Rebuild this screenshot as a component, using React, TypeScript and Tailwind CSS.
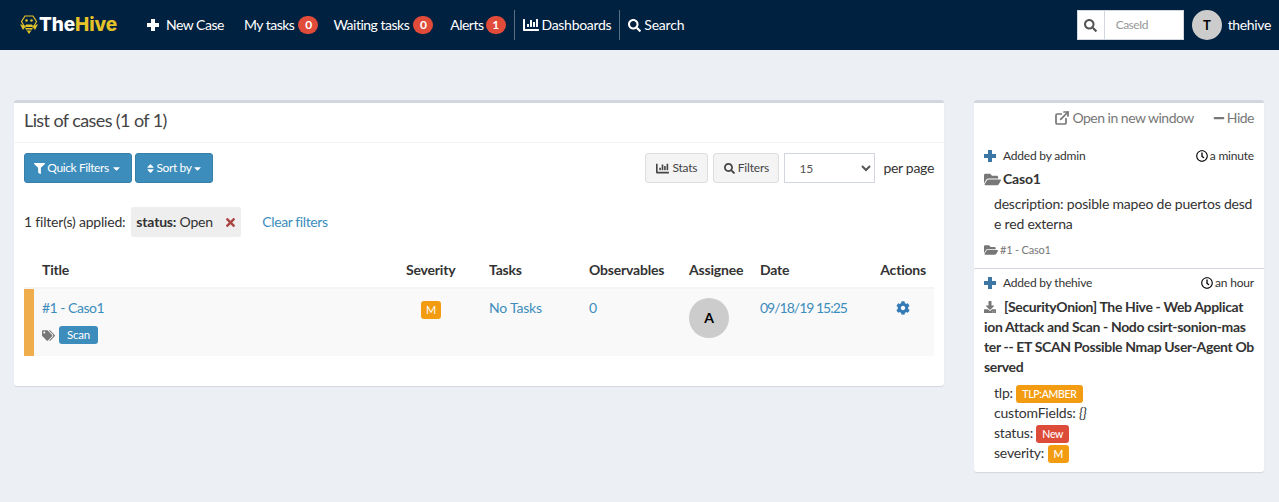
import { FaFilter, FaSort, FaCaretDown, FaChartBar, FaSearch, FaTimes, FaTags, FaCog, FaMinus, FaRegClock, FaFolderOpen, FaDownload } from "react-icons/fa";
import { FiExternalLink } from "react-icons/fi";

function Badge({ n, className = "ml-[4px]" }: { n: number; className?: string }) {
  return (
    <span className={`inline-flex h-[18px] w-5 items-center justify-center rounded-full bg-[#e04b3a] text-xs font-bold text-white ${className}`}>
      {n}
    </span>
  );
}

// thick FA4 style plus, the FA5 one from react-icons is too thin here
function PlusIcon({ className }: { className: string }) {
  return (
    <svg width="12" height="12" viewBox="0 0 12 12" fill="currentColor" className={className}>
      <path d="M4 0h4v4h4v4H8v4H4V8H0V4h4z" />
    </svg>
  );
}

function BeeLogo() {
  return (
    <svg width="18" height="19" viewBox="0 0 18 19" fill="none">
      <path d="M5 1h8l3.500 5.500L14 11H4L1.500 6.500z" stroke="#e6c229" strokeWidth="1.2" />
      <circle cx="6.500" cy="5.500" r="1.300" fill="#e6c229" />
      <circle cx="11.500" cy="5.500" r="1.300" fill="#e6c229" />
      <path d="M0 9l5.500 2.500L3 15zM18 9l-5.500 2.500L15 15z" fill="#e6c229" />
      <path d="M6 9.500h6l1 3.500-4 6-4-6z" fill="#e6c229" />
      <path d="M5.500 12.500h7M6.500 15h5" stroke="#00213f" strokeWidth="1" />
    </svg>
  );
}

function Label({ color, children }: { color: string; children: string }) {
  return (
    <span className={`inline-block rounded-[3px] px-[6px] py-[3px] align-baseline text-[10.500px] leading-3 font-medium tracking-[-0.3px] text-white ${color}`}>
      {children}
    </span>
  );
}

export default function App() {
  return (
    <div className="h-[502px] overflow-hidden bg-[#ecf0f5] font-['Lato',sans-serif] text-sm tracking-[-0.2px] whitespace-nowrap text-[#333]">
      <header className="flex h-[50px] items-center bg-[#00213f] pr-2 pl-5 tracking-[-0.5px] text-white">
        <div className="flex items-center gap-[1px]">
          <BeeLogo />
          <span className="font-['Inter',sans-serif] text-[19px] font-extrabold tracking-[-0.1px]">
            The<span className="text-[#e6c229]">Hive</span>
          </span>
        </div>
        <nav className="ml-[30px] flex items-center">
          <span className="flex items-center">
            <PlusIcon className="mr-[7px]" /> New Case
          </span>
          <span className="ml-[20px] flex items-center">My tasks <Badge n={0} /></span>
          <span className="ml-[15px] flex items-center">Waiting tasks <Badge n={0} /></span>
          <span className="ml-[17px] flex items-center">Alerts <Badge n={1} className="ml-[2px]" /></span>
          <span className="mr-2 ml-2 h-[30px] w-px bg-[#5b6f82]" />
          <span className="flex items-center gap-[3px] tracking-[-0.3px]"><FaChartBar className="text-[16px]" /> Dashboards</span>
          <span className="mx-2 h-[30px] w-px bg-[#5b6f82]" />
          <span className="flex items-center gap-[3px] tracking-[-0.2px]"><FaSearch className="text-[13px]" /> Search</span>
        </nav>
        <div className="ml-auto flex items-center">
          <div className="flex h-[30px] w-[107px] items-center border border-[#d2d6de] bg-white">
            <span className="flex h-full w-[27px] items-center justify-center border-r border-[#d2d6de] text-[#555]">
              <FaSearch className="text-[13px]" />
            </span>
            <span className="ml-[11px] text-xs text-[#999]">CaseId</span>
          </div>
          <span className="ml-2 flex h-[30px] w-[30px] items-center justify-center rounded-full bg-[#ccc] text-[13px] font-bold text-black">T</span>
          <span className="ml-[6px] tracking-[-0.35px]">thehive</span>
        </div>
      </header>

      <main className="flex items-start pt-[50px] pr-[15px] pl-[14px]">
        <section className="h-[286px] w-[930px] rounded-[3px] border-t-[3px] border-[#d2d6de] bg-white shadow-[0_1px_1px_rgba(0,0,0,0.1)]">
          <h2 className="h-10 border-b border-[#f4f4f4] px-[10px] pt-[6px] text-lg leading-[22px] tracking-[-0.6px] text-[#444]">List of cases (1 of 1)</h2>
          <div className="flex items-center px-[10px] pt-[10px] text-xs">
            <button className="flex h-[30px] w-[108px] items-center justify-center gap-[2px] rounded-[3px] border border-[#367fa9] bg-[#3c8dbc] tracking-[-0.4px] text-white">
              <FaFilter className="text-[11px]" /> Quick Filters <FaCaretDown className="text-[11px]" />
            </button>
            <button className="ml-[3px] flex h-[30px] w-[78px] items-center justify-center gap-[1px] rounded-[3px] border border-[#367fa9] bg-[#3c8dbc] tracking-[-0.4px] text-white">
              <FaSort className="text-[11px]" /> Sort by <FaCaretDown className="text-[11px]" />
            </button>
            <button className="ml-auto flex h-[30px] w-[63px] items-center justify-center gap-[3px] rounded-[3px] border border-[#ddd] bg-[#f4f4f4] text-[#444]">
              <FaChartBar className="text-[13px]" /> Stats
            </button>
            <button className="ml-[5px] flex h-[30px] w-[66px] items-center justify-center gap-[3px] rounded-[3px] border border-[#ddd] bg-[#f4f4f4] text-[#444]">
              <FaSearch className="text-[11px]" /> Filters
            </button>
            <select defaultValue="15" className="ml-[5px] h-[30px] w-[91px] border border-[#d2d6de] bg-white pl-[10px] text-[#555]">
              <option>15</option>
            </select>
            <span className="ml-[8px] text-sm tracking-[-0.3px]">per page</span>
          </div>
          <div className="mt-[24px] flex items-center px-[10px]">
            <span>1 filter(s) applied:</span>
            <span className="ml-[6px] flex h-[30px] w-[110px] items-center rounded-[3px] bg-[#eee] pl-[5px]">
              <b>status:</b>&nbsp;Open
              <FaTimes className="mr-[4px] ml-auto text-[13px] text-[#a94442]" />
            </span>
            <a className="ml-[21px] tracking-[-0.4px] text-[#3c8dbc]">Clear filters</a>
          </div>
          <div className="mx-[10px] mt-[18px]">
            <div className="grid h-[34px] grid-cols-[374px_83px_100px_100px_71px_120px_62px] items-center border-b-2 border-[#f4f4f4] pb-[2px] font-bold">
              <span className="pl-[18px]">Title</span>
              <span className="pl-2">Severity</span>
              <span className="pl-2">Tasks</span>
              <span className="pl-2">Observables</span>
              <span className="pl-2">Assignee</span>
              <span className="pl-2">Date</span>
              <span className="pr-2 text-right">Actions</span>
            </div>
            <div className="grid h-[67px] grid-cols-[364px_83px_100px_100px_71px_120px_62px] border-l-[10px] border-[#f0ad4e] bg-[#f9f9f9] text-[#3c8dbc]">
              <div className="pt-[9px] pl-2">
                <a className="tracking-[-0.5px]">#1 - Caso1</a>
                <div className="mt-[8px] flex items-center gap-[4px]">
                  <FaTags className="text-[13px] text-[#777]" />
                  <span className="rounded-[3px] bg-[#3c8dbc] px-2 py-[2px] text-[11.500px] leading-[14px] text-white">Scan</span>
                </div>
              </div>
              <div className="pt-[12px] pl-[23px]">
                <span className="flex h-[18px] w-5 items-center justify-center rounded-[3px] bg-[#f39c12] text-[11px] text-white">M</span>
              </div>
              <a className="pt-[9px] pl-2">No Tasks</a>
              <a className="pt-[9px] pl-2">0</a>
              <div className="pt-[9px] pl-2">
                <span className="flex h-10 w-10 items-center justify-center rounded-full bg-[#ccc] text-sm font-bold text-black">A</span>
              </div>
              <a className="pt-[9px] pl-2 tracking-[-1px]">09/18/19 15:25</a>
              <div className="pt-[12px] pl-[24px] text-[#337ab7]">
                <FaCog className="text-sm" />
              </div>
            </div>
          </div>
        </section>

        <aside className="ml-[30px] h-[372px] w-[290px] rounded-[3px] border-t-[3px] border-[#d2d6de] bg-white shadow-[0_1px_1px_rgba(0,0,0,0.1)]">
          <div className="flex h-[29px] items-center justify-end pr-[10px] tracking-[-0.5px] text-[#777]">
            <FiExternalLink strokeWidth={2.6} className="mr-[2px] text-[16px]" /> Open in new window
            <FaMinus className="mr-[2px] ml-[19px] text-[12px]" /> Hide
          </div>
          <div className="h-[137px] border-b border-[#d2d6de] px-[10px] pt-[16px]">
            <div className="flex items-center text-xs leading-4">
              <PlusIcon className="text-[#3c77a5]" />
              <span className="ml-[7px]">Added by admin</span>
              <span className="ml-auto flex items-center gap-[2px]"><FaRegClock className="text-xs text-black" /> a minute</span>
            </div>
            <div className="mt-[5px] flex items-center gap-[2px] leading-5 font-bold">
              <FaFolderOpen className="text-[17px] text-[#777]" /> Caso1
            </div>
            <div className="mt-[5px] pl-[10px] leading-5">
              <div>description: posible mapeo de puertos desd</div>
              <div>e red externa</div>
            </div>
            <div className="mt-[8px] flex items-center gap-[2px] text-[11px] leading-4 text-[#777]">
              <FaFolderOpen className="text-[14px]" /> #1 - Caso1
            </div>
          </div>
          <div className="px-[10px] pt-[6px]">
            <div className="flex items-center text-xs leading-4">
              <PlusIcon className="text-[#3c77a5]" />
              <span className="ml-[7px]">Added by thehive</span>
              <span className="ml-auto flex items-center gap-[2px]"><FaRegClock className="text-xs text-black" /> an hour</span>
            </div>
            <div className="mt-[6px] leading-5 font-bold tracking-[-0.35px]">
              <div className="flex items-center">
                <FaDownload className="mr-[8px] text-[12px] text-[#777]" /> [SecurityOnion] The Hive - Web Applicat
              </div>
              <div>ion Attack and Scan - Nodo csirt-sonion-mas</div>
              <div>ter -- ET SCAN Possible Nmap User-Agent Ob</div>
              <div>served</div>
            </div>
            <div className="mt-[6px] pl-[10px] leading-5">
              <div>tlp: <Label color="bg-[#f39c12]">TLP:AMBER</Label></div>
              <div>customFields: <i>{"{}"}</i></div>
              <div>status: <Label color="bg-[#dd4b39]">New</Label></div>
              <div>severity: <Label color="bg-[#f39c12]">M</Label></div>
            </div>
          </div>
        </aside>
      </main>
    </div>
  );
}
